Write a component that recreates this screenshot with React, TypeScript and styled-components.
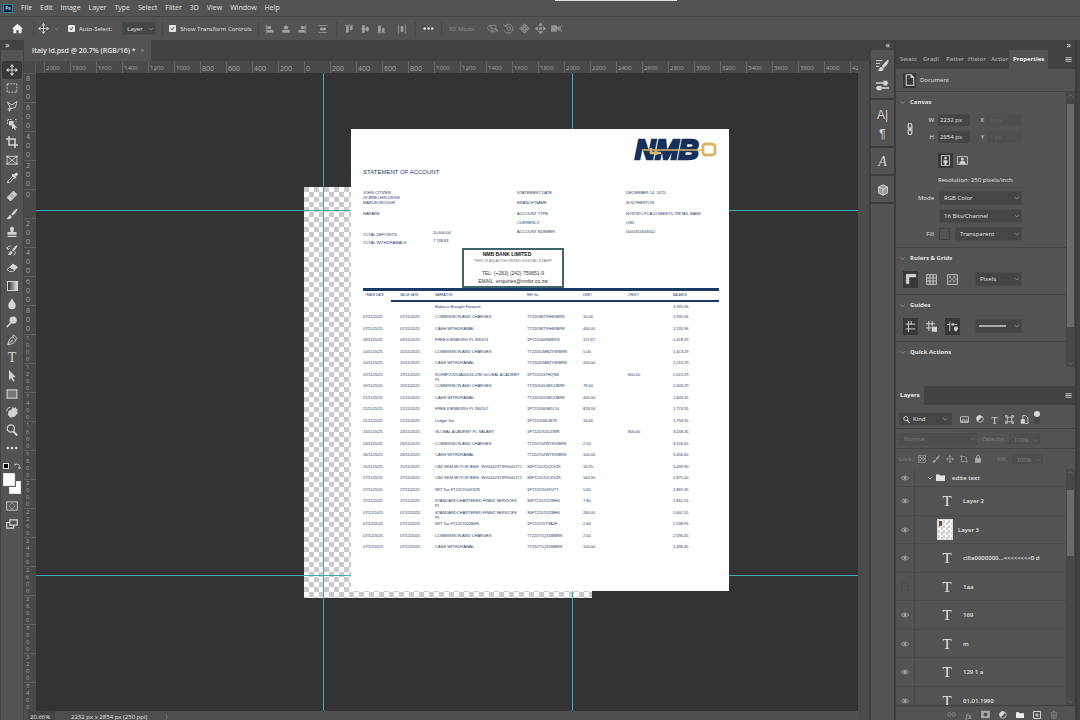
import React from "react";
import styled, { createGlobalStyle, css } from "styled-components";

const c = {
  panel: "#535353",
  strip: "#424242",
  line: "#444444",
  edge: "#3c3c3c",
  field: "#454545",
  canvas: "#333333",
  text: "#e2e2e2",
  dim: "#8a8a8a",
  icon: "#d4d4d4",
  navy: "#1b3a66",
  guide: "#45a9aa",
};

const Global = createGlobalStyle`
  *, *::before, *::after { box-sizing: border-box; }
  body { margin: 0; background: ${c.canvas}; overflow: hidden; }
  button, input, select { font: inherit; color: inherit; margin: 0; padding: 0; border: 0; border-radius: 0; background: none; }
  svg { display: block; flex: none; }
`;

/* ---------- icons ---------- */

const paths: Record<string, React.ReactNode> = {
  move: (
    <g fill="currentColor" stroke="none">
      <path d="M7.3 3.5h1.4v3.8h3.8v1.4H8.7v3.8H7.3V8.7H3.5V7.3h3.8z" />
      <path d="M8 0l3 3.6H5zM8 16l-3-3.6h6zM0 8l3.6-3v6zM16 8l-3.6 3V5z" />
    </g>
  ),
  marquee: <rect x="1.5" y="2.5" width="13" height="11" strokeDasharray="2.6 1.5" />,
  lasso: <path d="M2 3l6 3.5L14.500 2l-2 8-6.500 1.500zM6 11.500c-3-1-4.500 1-2.500 2s3-1 2-2.500l-1 4.500" />,
  objectSelect: (
    <>
      <path d="M2 8V2h6M12 2h1.500v3" strokeDasharray="2 1.200" />
      <path d="M4 4h6v6H4zM8 6l7 6.500-3.200.2 1.600 2.800-1.500.5-1.500-2.700L8 15z" fill="currentColor" stroke="none" />
    </>
  ),
  crop: <path d="M4 0v12h12M0 4h12v12" strokeWidth="2" />,
  frame: <path d="M1.500 3h13v10.500h-13zM2 3.500l12 9.500M14 3.500L2 13M0 3h3M13 3h3M0 13.500h3M13 13.500h3" />,
  eyedropper: (
    <>
      <path d="M9 5.500L2.500 12 2 14.500 4.500 14 11 7.500z" />
      <path d="M8 4l1.300-1L11 4.300 13 1.500c2-1 3.200 1 2 2.500l-2.800 2L13 7.500 12 8.500z" fill="currentColor" />
    </>
  ),
  heal: (
    <>
      <path d="M10 1.500l4.500 4.500-8.500 8.500L1.500 10z" fill="currentColor" />
      <path d="M5 7l4 4M7 5l4 4" stroke="#777" />
    </>
  ),
  brush: (
    <g fill="currentColor" stroke="none">
      <path d="M15.500.5C13 1 8 6 7 8.500L8.500 10C11 8.500 15 4 15.500.5z" />
      <path d="M6 9.500c-3 0-2 3-5.500 4.500 3 1.600 7 .8 7-3z" />
    </g>
  ),
  stamp: <path d="M8 1c2.200 0 3 1.600 2.500 3.200L9.700 8H14v3.500H2V8h4.300l-.8-3.800C5 2.600 5.800 1 8 1zM2 13h12v1.500H2z" fill="currentColor" stroke="none" />,
  historyBrush: (
    <>
      <path d="M15.500 1C13 2 9 6 8 8.500L9.500 10C12 8 15 4.500 15.500 1zM7 9.500c-3 0-2 3-5 4.500 3 1.400 6.500.5 6.500-3z" fill="currentColor" stroke="none" />
      <path d="M2 7c-1-3 2-5 5-4M1 4l1 3 3-1M12 10c1 3 0 4-2 5" />
    </>
  ),
  eraser: (
    <>
      <path d="M9 3l6 3.500-5 6H4.500L1.500 10z" />
      <path d="M9 3l6 3.500-3.500 4L5 7z" fill="currentColor" />
    </>
  ),
  drop: <path d="M8 0c1 4 5 6 5 10a5 5 0 0 1-10 0C3 6 7 4 8 0z" fill="currentColor" stroke="none" />,
  dodge: (
    <>
      <circle cx="9.500" cy="5.500" r="4.800" fill="currentColor" stroke="none" />
      <path d="M6.500 9L1 15" strokeWidth="2" />
    </>
  ),
  pen: <path d="M10 1l5 5-2 2c-1 4-5 5.500-10.500 6.500C3.500 9 5 5 9 4zM9 4l4 4M2.500 14.500l5-5.500M7.500 8.500h1v1h-1z" />,
  arrow: <path d="M4 0l9 9.500H9l2.500 5-2 1L7 10.500 4 13.500z" fill="currentColor" stroke="none" />,
  rect: <rect x="1.500" y="2.500" width="13" height="11" fill="#777" strokeWidth="1.500" />,
  hand: (
    <>
      <path d="M4 7l4-2 1-3 1.500 2 2-2 .5 3 2-1-1 4 1.500 1-4 4.500-5 1.500L3 12z" fill="currentColor" />
      <path d="M1 7c0-4 3-5.500 5-5" />
    </>
  ),
  zoom: (
    <>
      <circle cx="6.500" cy="6" r="4.800" strokeWidth="1.700" />
      <path d="M10 10l5 5.500" strokeWidth="2.500" />
    </>
  ),
  dots: (
    <g fill="currentColor" stroke="none">
      <circle cx="2.500" cy="8" r="1.800" />
      <circle cx="8" cy="8" r="1.800" />
      <circle cx="13.500" cy="8" r="1.800" />
    </g>
  ),
  quickMask: (
    <>
      <rect x="1" y="2.500" width="14" height="11" />
      <circle cx="8" cy="8" r="3.200" strokeDasharray="1.500 1" />
    </>
  ),
  screens: <path d="M5 2.500h10v7H5zM5 6H1v7.500h9V9.500" strokeWidth="1.500" />,
  home: <path d="M8 1l8 7.500h-2V15H9.700v-4.500H6.300V15H2V8.500H0z" fill="currentColor" stroke="none" />,
  chevron: <path d="M3 5.500l5 5 5-5" strokeWidth="1.600" />,
  chevronUp: <path d="M3 10.500l5-5 5 5" strokeWidth="1.600" />,
  check: <path d="M3 8l3.500 4L13 3.500" strokeWidth="3" />,
  alignLeft: <path d="M2 1v14M4 4h5v3H4zM4 10h9v3H4z" fill="currentColor" />,
  alignCenter: <path d="M8 1v14M5 4h6v3H5zM2.500 10h11v3h-11z" fill="currentColor" />,
  alignRight: <path d="M14 1v14M7 4h5v3H7zM3 10h9v3H3z" fill="currentColor" />,
  distribute: <path d="M1 2.500h14M1 13.500h14M4 6.500h8v3H4z" fill="currentColor" />,
  alignTop: <path d="M1 2h14M4 4h3v9H4zM10 4h3v5h-3z" fill="currentColor" />,
  alignMiddle: <path d="M1 8h14M4 2.500h3v11H4zM10 5h3v6h-3z" fill="currentColor" />,
  alignBottom: <path d="M1 14h14M4 3h3v9H4zM10 7h3v5h-3z" fill="currentColor" />,
  distributeH: <path d="M2.500 1v14M13.500 1v14M6.500 4h3v8h-3z" fill="currentColor" />,
  orbit: <path d="M2 9c-3-3 0-6 4-4M5 3.500h8v5H7zM2 9c3 5 10 5 13 1M12 9.500l3 0 0 3.500M5 9l4 3" />,
  roll: (
    <>
      <path d="M3 4a6.500 6.500 0 1 1-1 7M1 2l2 3 3-1" />
      <path d="M5.500 6.500l4-1.500 2 4.500-4 1.500z" />
    </>
  ),
  pan: <path d="M8 1l3 3H9v3h3V5l3 3-3 3V9H9v3h2l-3 3-3-3h2V9H4v2L1 8l3-3v2h3V4H5z" fill="currentColor" fillOpacity="0.5" />,
  slide: <path d="M8 0l2.500 3.500h-5zM8 16l-3-4h6zM0 8l4-2.500v5zM16 8l-4 2.500v-5zM6.500 6.500h3v3h-3z" fill="currentColor" />,
  camera: (
    <>
      <path d="M0 4h8v8H0zM8 8l4-3v6z" fill="currentColor" />
      <path d="M15.500 3L13 8l2.500 5" />
    </>
  ),
  brushSettings: (
    <>
      <path d="M0 2h8M0 5.500h5M0 9h4" />
      <path d="M15 1.500C12 3 9 7 8 9l1.500 1.500C12 9 15 5 15 1.500zM7 10c-2.500 0-2 3-4 4 3 1 6 0 6-2z" fill="currentColor" />
    </>
  ),
  brushes: <path d="M0 5h9M7 11h9M10 3h3v4h-3zM13 5h2M2 9.500h4v3.500H2zM0 11h2" fill="currentColor" strokeWidth="1.800" />,
  cube: (
    <>
      <path d="M8 1l6 3v8l-6 3-6-3V4z" fill="#999" />
      <path d="M2 4l6 3 6-3M8 7v8" />
    </>
  ),
  menu: <path d="M1 4h14M1 8h14M1 12h14" strokeWidth="1.800" />,
  page: <path d="M3 1h6.500L13 4.500V15H3zM9.500 1v3.500H13" strokeWidth="1.400" />,
  link: <path d="M5.500 7V3a2.500 2.500 0 0 1 5 0v4h-5M5.500 9v4a2.500 2.500 0 0 0 5 0V9h-5M8 5v6" strokeWidth="1.400" />,
  portrait: (
    <>
      <rect x="2" y="1" width="12" height="14" />
      <path d="M8 2.500a2 2 0 0 1 0 4 2 2 0 0 1 0-4zM5 7.500h6v4H9.500V15h-3v-3.500H5z" fill="currentColor" stroke="none" />
    </>
  ),
  landscape: (
    <>
      <rect x="1" y="2.500" width="14" height="11" />
      <path d="M8 4a2 2 0 0 1 0 4 2 2 0 0 1 0-4zM3.500 13c0-6 9-6 9 0z" fill="currentColor" stroke="none" />
    </>
  ),
  rulers: <path d="M1 1h14v5H6v9H1z" fill="currentColor" stroke="#383838" strokeDasharray="1.500 1" />,
  grid: <path d="M1 1h14v14H1zM1 5.700h14M1 10.300h14M5.700 1v14M10.300 1v14" strokeWidth="1.300" />,
  checker: (
    <>
      <rect x="1" y="1" width="14" height="14" />
      <path d="M3 3h3v3H3zM9 3h3v3H9zM6 6h3v3H6zM12 6h2v3h-2zM3 9h3v3H3zM9 9h3v3H9z" fill="#999" stroke="none" />
    </>
  ),
  guides: <path d="M5 0v16M1 4.500h14M1 11.500h14M9 0v5" strokeWidth="1.400" />,
  guidesLock: (
    <>
      <path d="M4 0v14M0 4h13M0 10h8M9 0v8" strokeWidth="1.400" />
      <path d="M9 9h7v6H9z" fill="currentColor" />
    </>
  ),
  guidesSmart: (
    <>
      <path d="M4 1v14M0 5h4M6 5h9M7 3l3 4M10 3L7 7" />
      <path d="M11 9h4v3l-2 3-2-2z" fill="currentColor" />
    </>
  ),
  image: <path d="M1 3h14v10H1zM2 12l4-5 3 3 2-2 3 4z" strokeWidth="1.400" />,
  adjust: (
    <>
      <circle cx="8" cy="8" r="6.500" strokeWidth="1.400" />
      <path d="M12.500 3.500a6.500 6.500 0 1 0-9 9z" fill="currentColor" stroke="none" />
    </>
  ),
  shape: <path d="M4 4h8v8H4zM1 1h3v3H1zM12 1h3v3h-3zM1 12h3v3H1zM12 12h3v3h-3z" strokeWidth="1.400" />,
  smart: (
    <>
      <path d="M5 8V1h5l4 4v10H9" strokeWidth="1.600" />
      <path d="M2 8h6v7H2z" fill="currentColor" />
    </>
  ),
  lock: (
    <>
      <rect x="2.500" y="7" width="11" height="8" fill="currentColor" />
      <path d="M5 7V4a3 3 0 0 1 6 0v3" strokeWidth="1.800" />
    </>
  ),
  artboard: <path d="M3 0v13h13M0 3h10l3 3v10" strokeWidth="1.400" />,
  eye: (
    <>
      <path d="M.5 8C3 3 13 3 15.500 8 13 13 3 13 .5 8z" strokeWidth="1.600" />
      <circle cx="8" cy="8" r="2.500" fill="currentColor" />
    </>
  ),
  folder: <path d="M0 2.500h6l1.500 2H16V14H0z" fill="currentColor" stroke="none" />,
  chain: <path d="M7 5H4a3 3 0 0 0 0 6h3M9 5h3a3 3 0 0 1 0 6H9M5 8h6" strokeWidth="1.500" />,
  mask: (
    <>
      <rect x="1" y="2" width="14" height="12" fill="currentColor" />
      <circle cx="8" cy="8" r="3.500" fill={c.panel} stroke="none" />
    </>
  ),
  plus: <path d="M1 1h14v14H1zM8 4.500v7M4.500 8h7" strokeWidth="1.600" />,
  trash: <path d="M1 3.500h14M6 3V1h4v2M3 4l.8 11h8.400L13 4M6.500 6v7M9.500 6v7" strokeWidth="1.400" />,
  swap: <path d="M3 6V3h6a3 3 0 0 1 3 3v6M5 1L2.500 4 0 1M10 10l2.500 4 2.500-4" strokeWidth="1.500" />,
};

const Icon = ({ name, size = 11 }: { name: string; size?: number }) => (
  <svg width={size} height={size} viewBox="0 0 16 16" fill="none" stroke="currentColor" strokeWidth="1.200" aria-hidden="true">
    {paths[name]}
  </svg>
);

/* ---------- application frame ---------- */

const Shell = styled.div`
  position: relative;
  display: flex;
  flex-direction: column;
  height: 100vh;
  background: ${c.panel};
  color: ${c.text};
  font: 6px/10px "Open Sans", "Noto Sans", sans-serif;
  white-space: nowrap;
`;

const WindowEdge = styled.div`
  position: absolute;
  top: 0;
  left: 555px;
  width: 122px;
  height: 1px;
  background: #dfe3e2;
`;

const MenuBar = styled.nav`
  display: flex;
  align-items: center;
  flex: none;
  gap: 8px;
  height: 17px;
  padding-left: 3px;
  border-bottom: 1px solid ${c.line};
`;

const AppBadge = styled.span`
  width: 10px;
  height: 9px;
  border: 1px solid #2b8aa5;
  background: #06203a;
  color: #9fd8ff;
  font-size: 5px;
  line-height: 7px;
  font-weight: 700;
  text-align: center;
`;

const MenuItem = styled.button`
  font-size: 7px;
  line-height: 10px;
`;

const OptionsBar = styled.div`
  display: flex;
  align-items: center;
  flex: none;
  height: 23px;
  padding-left: 12px;
  color: ${c.text};
`;

const Group = styled.div<{ $gap?: number; $left?: number; $dim?: boolean }>`
  display: flex;
  align-items: center;
  gap: ${(p) => p.$gap ?? 5}px;
  margin-left: ${(p) => p.$left ?? 0}px;
  color: ${(p) => (p.$dim ? c.dim : "inherit")};
`;

const Divider = styled.span<{ $space?: number }>`
  width: 1px;
  height: 15px;
  margin: 0 ${(p) => p.$space ?? 6}px;
  background: #4a4a4a;
`;

const IconButton = styled.button<{ $on?: boolean; $w?: number; $h?: number; $tone?: string }>`
  display: grid;
  place-items: center;
  flex: none;
  width: ${(p) => p.$w ?? 11}px;
  height: ${(p) => p.$h ?? 11}px;
  color: ${(p) => p.$tone ?? c.icon};
  background: ${(p) => (p.$on ? "#383838" : "transparent")};
`;

const CheckLabel = styled.label`
  display: flex;
  align-items: center;
  gap: 4px;
  font-weight: 500;
`;

const CheckBox = styled.span`
  display: grid;
  place-items: center;
  color: #333;
  > * { grid-area: 1 / 1; }
  svg { pointer-events: none; }
  input { appearance: none; width: 7px; height: 7px; border-radius: 1px; background: #e6e6e6; }
`;

const Check = ({ label }: { label: string }) => (
  <CheckLabel>
    <CheckBox>
      <input type="checkbox" defaultChecked />
      <Icon name="check" size={5} />
    </CheckBox>
    {label}
  </CheckLabel>
);

const SelectBox = styled.span<{ $w: number; $h?: number; $dim?: boolean }>`
  display: grid;
  align-items: center;
  flex: none;
  width: ${(p) => p.$w}px;
  height: ${(p) => p.$h ?? 14}px;
  border: 1px solid #4c4c4c;
  background: ${(p) => (p.$dim ? "#4e4e4e" : c.field)};
  color: ${(p) => (p.$dim ? "#7c7c7c" : c.text)};
  > * { grid-area: 1 / 1; }
  select { appearance: none; width: 100%; height: 100%; padding-left: 4px; outline: 0; }
  svg { justify-self: end; margin-right: 1px; opacity: 0.6; pointer-events: none; }
`;

type SelectProps = { label: string; value: string; w: number; h?: number; dim?: boolean };

const Select = ({ label, value, w, h, dim }: SelectProps) => (
  <SelectBox $w={w} $h={h} $dim={dim}>
    <select aria-label={label} defaultValue={value}>
      <option>{value}</option>
    </select>
    <Icon name="chevron" size={6} />
  </SelectBox>
);

const Workspace = styled.div`
  display: flex;
  flex: 1;
  min-height: 0;
  padding-right: 3px;
  background: ${c.strip};
`;

/* ---------- left toolbar ---------- */

const Toolbar = styled.aside`
  display: flex;
  flex-direction: column;
  flex: none;
  width: 24px;
  border-left: 1px solid ${c.strip};
  border-right: 1px solid ${c.strip};
  background: ${c.panel};
`;

const Collapse = styled.button<{ $end?: boolean }>`
  flex: none;
  height: 10px;
  width: 100%;
  padding: 0 4px;
  background: ${c.strip};
  font-size: 9px;
  line-height: 8px;
  text-align: ${(p) => (p.$end ? "right" : "left")};
`;

const ToolList = styled.div`
  display: flex;
  flex-direction: column;
  align-items: center;
  padding-top: 11px;
`;

const Tool = styled.button<{ $on?: boolean }>`
  display: grid;
  place-items: center;
  width: 20px;
  height: 18px;
  border-radius: 2px;
  color: ${c.icon};
  background: ${(p) => (p.$on ? "#383838" : "transparent")};
`;

const GradientChip = styled.span`
  width: 11px;
  height: 10px;
  border: 1px solid ${c.icon};
  background: linear-gradient(90deg, #333, #ddd);
`;

const Letter = styled.span<{ $size?: number; $serif?: boolean; $italic?: boolean }>`
  font-family: ${(p) => (p.$serif ? '"Liberation Serif", serif' : '"Liberation Sans", sans-serif')};
  font-size: ${(p) => p.$size ?? 12}px;
  line-height: 14px;
  font-weight: 400;
  font-style: ${(p) => (p.$italic ? "italic" : "normal")};
`;

const SwatchTools = styled.div`
  display: flex;
  justify-content: space-between;
  align-items: center;
  width: 18px;
  height: 14px;
  margin-top: 2px;
`;

const MiniSwatch = styled.span`
  width: 6px;
  height: 6px;
  border: 1px solid #ddd;
  background: #000;
`;

const ColorPair = styled.div`
  display: grid;
  width: 18px;
  height: 21px;
  margin-bottom: 3px;
  > * { grid-area: 1 / 1; width: 12px; height: 13px; background: #fff; border: 1px solid #e0e0e0; }
  > :first-child { place-self: end; }
  > :last-child { place-self: start; box-shadow: 1px 1px 0 #666; }
`;

/* ---------- document window ---------- */

const DocWindow = styled.main`
  display: flex;
  flex-direction: column;
  flex: 1;
  min-width: 0;
`;

const TabRow = styled.div`
  display: flex;
  flex: none;
  height: 21px;
  background: ${c.strip};
`;

const DocTab = styled.button`
  display: flex;
  align-items: center;
  gap: 5px;
  padding: 0 6px 0 8px;
  background: ${c.panel};
  font-size: 7px;
  font-weight: 600;
  i { font-style: normal; font-weight: 400; color: #999; }
`;

const RulerRow = styled.div`
  display: flex;
  flex: none;
  height: 12px;
  border-top: 1px solid #4c4c4c;
  background: #494949;
`;

const RulerCorner = styled.span`
  flex: none;
  width: 12px;
  border-right: 1px solid #5a5a5a;
`;

const TopRuler = styled.div`
  display: flex;
  flex: 1;
  min-width: 0;
  padding-left: 8px;
  overflow: hidden;
`;

const TopMark = styled.span<{ $small: boolean }>`
  flex: none;
  width: 26px;
  border-left: 1px solid #666;
  color: #a4a4a4;
  font-size: ${(p) => (p.$small ? 6 : 7)}px;
  line-height: 13px;
  padding-left: 1px;
`;

const Stage = styled.div`
  display: flex;
  flex: 1;
  min-height: 0;
`;

const SideRuler = styled.div`
  display: flex;
  flex-direction: column;
  flex: none;
  width: 12px;
  background: #494949;
`;

const SideMark = styled.span<{ $small: boolean }>`
  display: flex;
  flex-direction: column;
  flex: 1;
  min-height: 0;
  padding-left: 2px;
  border-top: 1px solid #5e5e5e;
  color: #a0a0a0;
  font-size: ${(p) => (p.$small ? 6 : 7)}px;
  line-height: ${(p) => (p.$small ? 7 : 9)}px;
`;

const Canvas = styled.div`
  position: relative;
  flex: 1;
  min-width: 0;
  overflow: hidden;
  background: ${c.canvas};
`;

const Artboard = styled.div`
  position: absolute;
  left: 268px;
  top: 114px;
  width: 288px;
  height: 411px;
  background: conic-gradient(#fff 25%, #cbcbcb 0 50%, #fff 0 75%, #cbcbcb 0) 0 0 / 10px 10px;
`;

const Guide = styled.span<{ $axis: "x" | "y"; $at: number }>`
  position: absolute;
  background: ${c.guide};
  ${(p) =>
    p.$axis === "x"
      ? css`left: ${p.$at}px; top: 0; bottom: 0; width: 1px;`
      : css`top: ${p.$at}px; left: 0; right: 0; height: 1px;`}
`;

const StatusBar = styled.footer`
  display: flex;
  flex: none;
  height: 9px;
  padding-left: 4px;
  background: #4e4e4e;
  line-height: 12px;
  overflow: hidden;
`;

const ZoomField = styled.input`
  width: 27px;
  height: 12px;
  padding-left: 2px;
  background: ${c.strip};
`;

const StatusText = styled.span`
  margin: 0 18px 0 16px;
`;

const DocScroll = styled.div`
  flex: none;
  width: 13px;
  margin-top: 21px;
  border-right: 2px solid ${c.edge};
  background: #4b4b4b;
`;

/* ---------- statement ---------- */

const Statement = styled.article`
  position: absolute;
  left: 315px;
  top: 56px;
  display: flex;
  flex-direction: column;
  width: 378px;
  height: 462px;
  padding: 9px 10px 0 12px;
  background: #fff;
  color: ${c.navy};
  font: 4px/5px "Liberation Sans", Arial, sans-serif;
`;

const LogoRow = styled.div`
  display: flex;
  justify-content: flex-end;
  height: 24px;
  padding-right: 3px;
  svg { overflow: visible; }
`;

const Title = styled.h1`
  margin: 6px 0 0;
  font-size: 6px;
  line-height: 8px;
  font-weight: 400;
`;

const Details = styled.div`
  display: grid;
  grid-template-columns: 154px 109px 1fr;
  height: 72px;
  padding-top: 14px;
`;

const Holder = styled.div`
  display: flex;
  flex-direction: column;
  p { margin: 0 0 6px; white-space: pre-line; }
`;

const Totals = styled.dl`
  display: grid;
  grid-template-columns: 70px 1fr;
  row-gap: 1px;
  margin: 8px 0 0;
  dt { padding-top: 2px; }
  dd { margin: 0; }
`;

const Facts = styled.div`
  display: grid;
  grid-template-rows: 10px 11px 9px 9px 9px;
`;

const Stamp = styled.div`
  width: 102px;
  height: 40px;
  margin-left: 99px;
  padding-top: 1px;
  border: 2px solid #42646c;
  color: #333;
  font-size: 5px;
  line-height: 8px;
  text-align: center;
  strong, small, span { display: block; }
  strong { padding-right: 12px; line-height: 7px; color: #111; }
  small { font-size: 4px; line-height: 5px; color: #777; margin-bottom: 6px; }
`;

const Ledger = styled.table`
  width: 100%;
  border-collapse: separate;
  border-spacing: 0;
  border-top: 3px solid ${c.navy};
  table-layout: fixed;
  td, th { padding: 0; text-align: left; vertical-align: top; font-weight: 400; white-space: pre; }
  td:nth-child(2), th:nth-child(2) { padding-left: 9px; }
  th { height: 11px; padding-top: 2px; font-size: 3px; line-height: 5px; border-bottom: 2px solid ${c.navy}; }
  th:first-child { border-bottom: 0; padding-left: 2px; }
  td { height: 12px; }
  tr:nth-child(odd) td { height: 11px; }
  tbody tr:first-child td { height: 12px; padding-top: 2px; }
`;

const Col = styled.col<{ $w?: number }>`
  width: ${(p) => (p.$w ? `${p.$w}px` : "auto")};
`;

type Entry = [string, string, string, string, string, string, string];

const entries: Entry[] = [
  ["", "", "Balance Brought Forward", "", "", "", "1,945.96"],
  ["07/11/2025", "07/11/2025", "COMMISSION AND CHARGES", "TT22038T99HXIBR8", "10.00", "", "1,935.96"],
  ["07/11/2025", "07/11/2025", "CASH WITHDRAWAL", "TT22038T99HXIBR8", "400.00", "", "1,535.96"],
  ["09/11/2025", "09/11/2025", "FREEJOENBURG PL INV474", "1FT22040RMRXS", "117.67", "", "1,418.29"],
  ["10/11/2025", "10/11/2025", "COMMISSION AND CHARGES", "TT22041MBZYWIBR8", "5.00", "", "1,413.29"],
  ["10/11/2025", "10/11/2025", "CASH WITHDRAWAL", "TT22041MBZYWIBR8", "200.00", "", "1,213.29"],
  ["19/11/2025", "19/11/2025", "SCHBP22053A00034-ZIM GLOBAL ACADEMY\nPL", "1FT220537HQNS", "", "800.00", "2,013.29"],
  ["19/11/2025", "19/11/2025", "COMMISSION AND CHARGES", "TT220541G8D1IBR8", "78.00", "", "2,003.29"],
  ["21/11/2025", "21/11/2025", "CASH WITHDRAWAL", "TT220541G8D1IBR8", "400.00", "", "1,603.35"],
  ["21/11/2025", "21/11/2025", "FREEJOENBURG PL INV507", "1FT22056G81CG", "828.94", "", "1,774.35"],
  ["21/11/2025", "21/11/2025", "Ledger fee", "1FT220566JB7X", "16.00", "", "1,758.35"],
  ["24/11/2025", "24/11/2025", "GLOBAL ACADEMY PL SALARY", "1FT220701DZWR", "", "800.00", "3,558.35"],
  ["24/11/2025", "26/11/2025", "COMMISSION AND CHARGES", "TT22070ZWYKVIBR8", "2.50", "", "3,556.65"],
  ["26/11/2025", "26/11/2025", "CASH WITHDRAWAL", "TT22070ZWYKVIBR8", "100.00", "", "3,456.65"],
  ["25/11/2025", "25/11/2025", "CBZ SKM MOTOR BIKE  INV04423TS990411Y1", "36FT22070CXXZK", "16.95", "", "3,439.90"],
  ["27/11/2025", "27/11/2025", "CBZ SKM MOTOR BIKE  INV04423TS990411Y1", "36FT22070CXXZK", "564.90", "", "2,875.00"],
  ["27/11/2025", "27/11/2025", "WIT Tax FT22070GXXZK", "1FT22070GXVTT", "5.65", "", "2,869.35"],
  ["27/11/2025", "27/11/2025", "STANDARDCHARTERED FINBIZ SERVICES\nPL", "36FT2207022BH6", "7.80", "", "2,861.55"],
  ["07/12/2025", "07/12/2025", "STANDARDCHARTERED FINBIZ SERVICES\nPL", "36FT2207022BH6", "260.00", "", "2,601.55"],
  ["07/12/2025", "07/12/2025", "WIT Tax FT2207022BH6", "1FT22070T9A2F", "2.60", "", "2,598.95"],
  ["07/12/2025", "07/12/2025", "COMMISSION AND CHARGES", "TT22071Q31BIBR8", "2.50", "", "2,596.45"],
  ["07/12/2025", "07/12/2025", "CASH WITHDRAWAL", "TT22071Q31BIBR8", "100.00", "", "2,496.45"],
];

const BankLogo = () => (
  <svg width="84" height="24" viewBox="0 0 84 24" role="img" aria-label="NMB">
    <text x="3" y="21" fontFamily="Liberation Sans, Arial, sans-serif" fontSize="28" fontWeight="700" fontStyle="italic" fill="#16305c" stroke="#16305c" strokeWidth="2.500">
      NMB
    </text>
    <g fill="none" stroke="#d9b566">
      <path d="M10 12h61" strokeWidth="1.300" />
      <path d="M19 10v6M24 12v5M18 15h11" strokeWidth="2.500" />
      <path d="M73 6h7l3 1.500v8L80 17h-7l-2-1.500v-8z" strokeWidth="2.800" />
    </g>
  </svg>
);

const StatementSheet = () => (
  <Statement>
    <LogoRow>
      <BankLogo />
    </LogoRow>
    <Title>STATEMENT OF ACCOUNT</Title>
    <Details>
      <Holder>
        <p>{"JOHN CITIZEN\n09 BRECHIN DRIVE\nMARLBOROUGH"}</p>
        <p>HARARE</p>
        <Totals>
          <dt>TOTAL DEPOSITS</dt>
          <dd>10,600.04</dd>
          <dt>TOTAL WITHDRAWALS</dt>
          <dd>7,748.83</dd>
        </Totals>
      </Holder>
      <Facts>
        <span>STATEMENT DATE</span>
        <span>BRANCH NAME</span>
        <span>ACCOUNT TYPE</span>
        <span>CURRENCY</span>
        <span>ACCOUNT NUMBER</span>
      </Facts>
      <Facts>
        <span>DECEMBER 14, 2025</span>
        <span>SOUTHERTON</span>
        <span>NOSTRO FCA DOMESTIC RETAIL BANK</span>
        <span>USD</span>
        <span>0000315643002</span>
      </Facts>
    </Details>
    <Stamp>
      <strong>NMB BANK LIMITED</strong>
      <small>THIS IS AN AUTHORIZED DIGITAL STAMP</small>
      <span>TEL: (+263) (242) 759651-9</span>
      <span>EMAIL: enquiries@nmbz.co.zw</span>
    </Stamp>
    <Ledger>
      <colgroup>
        <Col $w={28} />
        <Col $w={44} />
        <Col $w={92} />
        <Col $w={56} />
        <Col $w={45} />
        <Col $w={45} />
        <Col />
      </colgroup>
      <thead>
        <tr>
          {["TRADE DATE", "VALUE DATE", "NARRATION", "REF. No.", "DEBIT", "CREDIT", "BALANCE"].map((h) => (
            <th key={h}>{h}</th>
          ))}
        </tr>
      </thead>
      <tbody>
        {entries.map((row, i) => (
          <tr key={i}>
            {row.map((cell, j) => (
              <td key={j}>{cell}</td>
            ))}
          </tr>
        ))}
      </tbody>
    </Ledger>
  </Statement>
);

/* ---------- right docks ---------- */

const Dock = styled.aside<{ $w: number }>`
  display: flex;
  flex-direction: column;
  flex: none;
  width: ${(p) => p.$w}px;
  min-height: 0;
  border-right: 2px solid ${c.edge};
  background: ${c.panel};
`;

const DockGroup = styled.div`
  display: flex;
  flex-direction: column;
  align-items: center;
  gap: 2px;
  padding: 6px 0 4px;
  border-bottom: 2px solid ${c.edge};
`;

const Panel = styled.section<{ $grow?: boolean }>`
  display: flex;
  flex-direction: column;
  flex: ${(p) => (p.$grow ? "1" : "none")};
  min-height: 0;
`;

const PanelTabs = styled.div`
  display: flex;
  align-items: stretch;
  flex: none;
  height: 19px;
  padding-right: 3px;
  background: ${c.strip};
`;

const PanelTab = styled.button<{ $on?: boolean; $w?: number }>`
  width: ${(p) => (p.$w ? `${p.$w}px` : "auto")};
  padding: 0 1px 2px 4px;
  padding-right: ${(p) => (p.$on ? 4 : 1)}px;
  overflow: hidden;
  text-align: left;
  color: ${(p) => (p.$on ? "#f0f0f0" : "#a6a6a6")};
  background: ${(p) => (p.$on ? c.panel : "transparent")};
  font-weight: ${(p) => (p.$on ? 700 : 600)};
`;

const TabMenu = styled.span`
  display: grid;
  place-items: center;
  margin-left: auto;
`;

const DocHeader = styled.div`
  display: flex;
  align-items: center;
  gap: 4px;
  height: 23px;
  padding-left: 7px;
  border-bottom: 1px solid ${c.line};
`;

const PropsBody = styled.div`
  display: flex;
  height: 294px;
`;

const PropsMain = styled.div`
  flex: 1;
  min-width: 0;
`;

const Section = styled.div<{ $h?: number }>`
  height: ${(p) => (p.$h ? `${p.$h}px` : "auto")};
  padding-left: 7px;
  border-bottom: ${(p) => (p.$h ? `1px solid ${c.line}` : "0")};
`;

const SectionTitle = styled.h2`
  display: flex;
  align-items: center;
  gap: 4px;
  height: 20px;
  margin: 0 0 0 -4px;
  font-size: 6px;
  line-height: 10px;
  font-weight: 700;
  svg { opacity: 0.6; }
`;

const SizeGrid = styled.div`
  display: grid;
  grid-template-columns: 14px 21px 32px 18px 33px;
  align-items: center;
  row-gap: 5px;
  margin-top: 2px;
  label { padding-right: 4px; text-align: right; }
`;

const LinkCell = styled.span`
  grid-row: 1 / 3;
  justify-self: center;
`;

const Field = styled.input`
  width: 100%;
  height: 12px;
  padding-left: 2px;
  background: ${c.field};
  &:disabled { background: #4f4f4f; color: #666; }
`;

const Line = styled.div<{ $left?: number; $gap?: number; $h?: number; $top?: number }>`
  display: flex;
  align-items: center;
  gap: ${(p) => p.$gap ?? 5}px;
  height: ${(p) => p.$h ?? 18}px;
  margin-top: ${(p) => p.$top ?? 0}px;
  padding-left: ${(p) => p.$left ?? 0}px;
`;

const RightLabel = styled.span`
  width: 31px;
  text-align: right;
`;

const FillChip = styled.span`
  width: 11px;
  height: 12px;
  border: 1px solid #444;
`;

const ScrollTrack = styled.div<{ $h?: number }>`
  display: flex;
  flex-direction: column;
  align-items: center;
  justify-content: space-between;
  flex: none;
  width: 9px;
  height: ${(p) => (p.$h ? `${p.$h}px` : "auto")};
  background: #484848;
  color: #808080;
`;

const Thumb = styled.span<{ $h: number; $top: number }>`
  width: 7px;
  height: ${(p) => p.$h}px;
  margin: ${(p) => p.$top}px 0 auto;
  background: #6a6a6a;
`;

const StrokeSelect = styled(SelectBox)`
  hr { width: 27px; margin: 0 0 0 3px; border: 0; border-top: 2px solid #aaa; pointer-events: none; }
`;

const FilterRow = styled.div`
  display: flex;
  align-items: center;
  gap: 4px;
  height: 24px;
  padding: 5px 0 0 3px;
  border-bottom: 1px solid ${c.line};
`;

const KindBox = styled.div`
  display: flex;
  align-items: center;
  width: 53px;
  margin-right: 3px;
  padding-left: 4px;
  background: ${c.field};
  font-weight: 500;
  ${SelectBox} { border-color: transparent; }
  select { padding-left: 2px; }
`;

const FilterSwitch = styled.span`
  width: 6px;
  height: 13px;
  margin-bottom: 3px;
  border-radius: 3px;
  background: #474747;
  &::before { content: ""; display: block; width: 6px; height: 6px; border-radius: 3px; background: #d8d8d8; }
`;

const LayerOptions = styled.div<{ $last?: boolean }>`
  display: flex;
  align-items: center;
  gap: 4px;
  height: 20px;
  padding-left: 3px;
  border-bottom: ${(p) => (p.$last ? "0" : `1px solid ${c.line}`)};
  color: #808080;
`;

const LayerArea = styled.div`
  display: flex;
  flex: 1;
  min-height: 0;
`;

const LayerList = styled.ul`
  flex: 1;
  min-width: 0;
  margin: 0;
  padding: 0;
  list-style: none;
  overflow: hidden;
`;

const LayerItem = styled.li<{ $group?: boolean }>`
  display: flex;
  align-items: center;
  height: ${(p) => (p.$group ? 18 : 29)}px;
  border-bottom: 1px solid #4a4a4a;
  font-weight: 600;
  &:nth-child(odd):not(:first-child) { height: 28px; }
`;

const Visibility = styled.button`
  display: grid;
  place-items: center;
  align-self: stretch;
  width: 19px;
  border-right: 1px solid #4a4a4a;
  color: #a4a4a4;
`;

const HiddenMark = styled.span`
  width: 8px;
  height: 9px;
  border: 1px solid #4b4b4b;
`;

const LayerThumb = styled.span<{ $wide?: boolean }>`
  display: grid;
  place-items: center;
  width: ${(p) => (p.$wide ? 26 : 16)}px;
  margin: ${(p) => (p.$wide ? "0 3px 0 19px" : "0 5px 0 22px")};
`;

const PixelThumb = styled.span`
  width: 16px;
  height: 21px;
  border: 1px solid #ddd;
  background: conic-gradient(#fff 25%, #ccc 0 50%, #fff 0 75%, #ccc 0) 0 0 / 5px 5px;
  &::before { content: ""; display: block; width: 3px; height: 5px; margin: 1px; background: #6b4a3c; }
`;

const GroupMark = styled.span`
  display: flex;
  align-items: center;
  gap: 3px;
  margin: 0 7px 0 12px;
`;

const PanelFooter = styled.footer`
  display: flex;
  align-items: center;
  justify-content: flex-end;
  flex: none;
  gap: 6px;
  height: 15px;
  padding: 3px 16px 0 0;
  border-top: 1px solid ${c.edge};
`;

const layers = [
  { name: "Layer 2", kind: "text" },
  { name: "Layer 3", kind: "pixel" },
  { name: "cilla0000000...<<<<<<<<0  d", kind: "text" },
  { name: "1aa", kind: "text", hidden: true },
  { name: "169", kind: "text" },
  { name: "m", kind: "text" },
  { name: "129 1 a", kind: "text" },
  { name: "01.01.1990", kind: "text" },
];

const menus = ["File", "Edit", "Image", "Layer", "Type", "Select", "Filter", "3D", "View", "Window", "Help"];

const tools = [
  "move", "marquee", "lasso", "objectSelect", "crop", "frame", "eyedropper", "heal", "brush", "stamp",
  "historyBrush", "eraser", "gradient", "drop", "dodge", "pen", "type", "arrow", "rect", "hand", "zoom", "dots",
];

const steps = (from: number, to: number) => {
  const out: number[] = [];
  for (let v = from; v <= to; v += 200) out.push(v);
  return out;
};

const ToolGlyph = ({ name }: { name: string }) => {
  if (name === "gradient") return <GradientChip />;
  if (name === "type") return <Letter $serif $size={14}>T</Letter>;
  return <Icon name={name} size={12} />;
};

const LeftToolbar = () => (
  <Toolbar>
    <Collapse aria-label="Collapse tools">»</Collapse>
    <ToolList>
      {tools.map((t) => (
        <Tool key={t} $on={t === "move"} aria-label={t}>
          <ToolGlyph name={t} />
        </Tool>
      ))}
      <SwatchTools>
        <MiniSwatch />
        <Icon name="swap" size={7} />
      </SwatchTools>
      <ColorPair>
        <span />
        <span />
      </ColorPair>
      <Tool aria-label="Quick mask">
        <Icon name="quickMask" size={12} />
      </Tool>
      <Tool aria-label="Screen mode">
        <Icon name="screens" size={12} />
      </Tool>
    </ToolList>
  </Toolbar>
);

const AlignButton = ({ name }: { name: string }) => (
  <IconButton aria-label={name} $tone="#a2a2a2">
    <Icon name={name} size={10} />
  </IconButton>
);

const Options = () => (
  <OptionsBar>
    <IconButton aria-label="Home" $tone="#f2f2f2"><Icon name="home" /></IconButton>
    <Divider $space={10} />
    <Group $gap={4} $left={-6}>
      <IconButton aria-label="Move tool"><Icon name="move" /></IconButton>
      <IconButton aria-label="Tool presets" $w={7} $tone={c.dim}><Icon name="chevron" size={7} /></IconButton>
    </Group>
    <Group $gap={10} $left={8}>
      <Check label="Auto-Select:" />
      <Select label="Auto-select target" value="Layer" w={34} h={13} />
    </Group>
    <Divider />
    <Check label="Show Transform Controls" />
    <Divider />
    <Group>
      {["alignLeft", "alignCenter", "alignRight"].map((n) => <AlignButton key={n} name={n} />)}
      <Group $left={5}>
        <AlignButton name="distribute" />
      </Group>
    </Group>
    <Divider $space={7} />
    <Group>
      {["alignTop", "alignMiddle", "alignBottom"].map((n) => <AlignButton key={n} name={n} />)}
      <Group $left={5}>
        <AlignButton name="distributeH" />
      </Group>
    </Group>
    <Divider $space={7} />
    <IconButton aria-label="More options" $tone="#e4e4e4"><Icon name="dots" /></IconButton>
    <Divider $space={7} />
    <Group $dim $gap={11}>
      <span>3D Mode:</span>
      <Group>
        {["orbit", "roll", "pan", "slide", "camera"].map((n) => (
          <IconButton key={n} aria-label={n} $tone="#939393"><Icon name={n} /></IconButton>
        ))}
      </Group>
    </Group>
  </OptionsBar>
);

const DocumentWindow = () => (
  <DocWindow>
    <TabRow>
      <DocTab>
        Italy id.psd @ 20.7% (RGB/16) * <i>×</i>
      </DocTab>
    </TabRow>
    <RulerRow>
      <RulerCorner />
      <TopRuler>
        {steps(-2000, 4200).map((v) => (
          <TopMark key={v} $small={Math.abs(v) >= 1000}>{Math.abs(v)}</TopMark>
        ))}
      </TopRuler>
    </RulerRow>
    <Stage>
      <SideRuler>
        {steps(-800, 3400).map((v) => (
          <SideMark key={v} $small={v >= 1000}>
            {String(Math.abs(v)).split("").map((d, i) => (
              <span key={i}>{d}</span>
            ))}
          </SideMark>
        ))}
      </SideRuler>
      <Canvas>
        <Artboard />
        <Guide $axis="x" $at={287} />
        <Guide $axis="x" $at={536} />
        <Guide $axis="y" $at={137} />
        <Guide $axis="y" $at={502} />
        <StatementSheet />
      </Canvas>
    </Stage>
    <StatusBar>
      <ZoomField aria-label="Zoom" defaultValue="20.66%" />
      <StatusText>2232 px x 2854 px (250 ppi)</StatusText>
      <span>〉</span>
    </StatusBar>
  </DocWindow>
);

const PropertiesPanel = () => (
  <Panel>
    <PanelTabs>
      <PanelTab $w={23}>Swatc</PanelTab>
      <PanelTab $w={23}>Gradi</PanelTab>
      <PanelTab $w={22}>Patter</PanelTab>
      <PanelTab $w={23}>Histor</PanelTab>
      <PanelTab $w={22}>Actior</PanelTab>
      <PanelTab $on>Properties</PanelTab>
      <TabMenu><Icon name="menu" size={7} /></TabMenu>
    </PanelTabs>
    <DocHeader>
      <IconButton $on $w={13} $h={15} aria-label="Document"><Icon name="page" size={12} /></IconButton>
      Document
    </DocHeader>
    <PropsBody>
      <PropsMain>
        <Section $h={156}>
          <SectionTitle><Icon name="chevron" size={7} />Canvas</SectionTitle>
          <SizeGrid>
            <LinkCell><Icon name="link" size={12} /></LinkCell>
            <label htmlFor="w">W</label>
            <Field id="w" defaultValue="2232 px" />
            <label htmlFor="x">X</label>
            <Field id="x" defaultValue="0 px" disabled />
            <label htmlFor="h">H</label>
            <Field id="h" defaultValue="2854 px" />
            <label htmlFor="y">Y</label>
            <Field id="y" defaultValue="0 px" disabled />
          </SizeGrid>
          <Line $left={35} $gap={2} $h={18} $top={8}>
            <IconButton $on $w={15} $h={15} aria-label="Portrait"><Icon name="portrait" /></IconButton>
            <IconButton $w={15} $h={15} aria-label="Landscape"><Icon name="landscape" /></IconButton>
          </Line>
          <Line $left={35} $top={6} $h={10}>Resolution:  250 pixels/inch</Line>
          <Line $top={4}>
            <RightLabel>Mode</RightLabel>
            <Select label="Mode" value="RGB Color" w={83} />
          </Line>
          <Line $left={36}>
            <Select label="Bit depth" value="16 Bits/Channel" w={83} />
          </Line>
          <Line>
            <RightLabel>Fill</RightLabel>
            <FillChip />
            <Select label="Fill" value="Transparent" w={67} />
          </Line>
        </Section>
        <Section $h={47}>
          <SectionTitle><Icon name="chevron" size={7} />Rulers &amp; Grids</SectionTitle>
          <Line $gap={6} $h={22}>
            <IconButton $on $w={15} $h={17} aria-label="Rulers"><Icon name="rulers" size={12} /></IconButton>
            <IconButton $w={15} $h={17} aria-label="Grid"><Icon name="grid" /></IconButton>
            <IconButton $w={15} $h={17} aria-label="Pixel grid"><Icon name="checker" /></IconButton>
            <Group $left={9}>
              <Select label="Units" value="Pixels" w={47} />
            </Group>
          </Line>
        </Section>
        <Section $h={47}>
          <SectionTitle><Icon name="chevron" size={7} />Guides</SectionTitle>
          <Line $gap={6} $h={22}>
            <IconButton $on $w={15} $h={17} aria-label="Show guides"><Icon name="guides" /></IconButton>
            <IconButton $w={15} $h={17} aria-label="Lock guides"><Icon name="guidesLock" /></IconButton>
            <IconButton $on $w={15} $h={17} aria-label="Smart guides"><Icon name="guidesSmart" /></IconButton>
            <Group $left={9}>
              <StrokeSelect $w={47}>
                <select aria-label="Guide style" />
                <hr />
                <Icon name="chevron" size={6} />
              </StrokeSelect>
            </Group>
          </Line>
        </Section>
        <Section>
          <SectionTitle><Icon name="chevron" size={7} />Quick Actions</SectionTitle>
        </Section>
      </PropsMain>
      <ScrollTrack $h={275}>
        <Icon name="chevronUp" size={7} />
        <Thumb $h={223} $top={5} />
        <Icon name="chevron" size={7} />
      </ScrollTrack>
    </PropsBody>
  </Panel>
);

const LayersPanel = () => (
  <Panel $grow>
    <PanelTabs>
      <PanelTab $on>Layers</PanelTab>
      <TabMenu><Icon name="menu" size={7} /></TabMenu>
    </PanelTabs>
    <FilterRow>
      <KindBox>
        <Icon name="zoom" size={7} />
        <Select label="Filter kind" value="Kind" w={40} h={12} />
      </KindBox>
      <IconButton aria-label="Pixel layers"><Icon name="image" size={9} /></IconButton>
      <IconButton aria-label="Adjustment layers"><Icon name="adjust" size={8} /></IconButton>
      <IconButton aria-label="Type layers"><Letter $serif $size={10}>T</Letter></IconButton>
      <IconButton aria-label="Shape layers"><Icon name="shape" size={9} /></IconButton>
      <IconButton aria-label="Smart objects"><Icon name="smart" size={9} /></IconButton>
      <FilterSwitch />
    </FilterRow>
    <LayerOptions>
      <Select label="Blend mode" value="Normal" w={79} h={12} dim />
      <span>Opacity:</span>
      <Select label="Opacity" value="100%" w={31} h={10} dim />
    </LayerOptions>
    <LayerOptions $last>
      <span>Lock:</span>
      {["checker", "brush", "move", "artboard", "lock"].map((n) => (
        <IconButton key={n} aria-label={n} $w={10} $tone="#a8a8a8"><Icon name={n} size={8} /></IconButton>
      ))}
      <Group $left={10}>
        <span>Fill:</span>
        <Select label="Fill opacity" value="100%" w={31} h={10} dim />
      </Group>
    </LayerOptions>
    <LayerArea>
      <LayerList>
        <LayerItem $group>
          <Visibility aria-label="Toggle group"><Icon name="eye" size={8} /></Visibility>
          <GroupMark>
            <Icon name="chevron" size={6} />
            <Icon name="folder" size={9} />
          </GroupMark>
          edite text
        </LayerItem>
        {layers.map((l) => (
          <LayerItem key={l.name}>
            <Visibility aria-label={`Toggle ${l.name}`}>{l.hidden ? <HiddenMark /> : <Icon name="eye" size={8} />}</Visibility>
            {l.kind === "pixel" ? (
              <LayerThumb><PixelThumb /></LayerThumb>
            ) : (
              <LayerThumb $wide><Letter $serif $size={15}>T</Letter></LayerThumb>
            )}
            {l.name}
          </LayerItem>
        ))}
      </LayerList>
      <ScrollTrack>
        <Icon name="chevronUp" size={7} />
        <Thumb $h={66} $top={14} />
        <Icon name="chevron" size={7} />
      </ScrollTrack>
    </LayerArea>
    <PanelFooter>
      <IconButton aria-label="Link layers" $tone={c.dim}><Icon name="chain" size={9} /></IconButton>
      <IconButton aria-label="Layer style" $tone="#aaa"><Letter $serif $italic $size={9}>fx</Letter></IconButton>
      <IconButton aria-label="Add mask" $tone="#aaa"><Icon name="mask" size={9} /></IconButton>
      <IconButton aria-label="New adjustment"><Icon name="adjust" size={8} /></IconButton>
      <IconButton aria-label="New group" $tone="#eee"><Icon name="folder" size={8} /></IconButton>
      <IconButton aria-label="New layer" $tone="#eee"><Icon name="plus" size={8} /></IconButton>
      <IconButton aria-label="Delete layer" $tone={c.dim}><Icon name="trash" size={8} /></IconButton>
    </PanelFooter>
  </Panel>
);

export default function App() {
  return (
    <Shell>
      <Global />
      <MenuBar>
        <AppBadge>Ps</AppBadge>
        {menus.map((m) => (
          <MenuItem key={m}>{m}</MenuItem>
        ))}
      </MenuBar>
      <WindowEdge />
      <Options />
      <Workspace>
        <LeftToolbar />
        <DocumentWindow />
        <DocScroll />
        <Dock $w={25}>
          <Collapse $end aria-label="Expand dock">«</Collapse>
          <DockGroup>
            <IconButton aria-label="Brush settings" $w={18} $h={18}><Icon name="brushSettings" size={13} /></IconButton>
            <IconButton aria-label="Brushes" $w={18} $h={18}><Icon name="brushes" size={13} /></IconButton>
          </DockGroup>
          <DockGroup>
            <IconButton aria-label="Character" $w={18} $h={17}><Letter>A|</Letter></IconButton>
            <IconButton aria-label="Paragraph" $w={18} $h={17}><Letter>¶</Letter></IconButton>
          </DockGroup>
          <DockGroup>
            <IconButton aria-label="Glyphs" $w={18} $h={16}><Letter $serif $italic $size={14}>A</Letter></IconButton>
          </DockGroup>
          <DockGroup>
            <IconButton aria-label="3D" $w={18} $h={16}><Icon name="cube" size={12} /></IconButton>
          </DockGroup>
        </Dock>
        <Dock $w={181}>
          <Collapse $end aria-label="Collapse dock">»</Collapse>
          <PropertiesPanel />
          <LayersPanel />
        </Dock>
      </Workspace>
    </Shell>
  );
}
